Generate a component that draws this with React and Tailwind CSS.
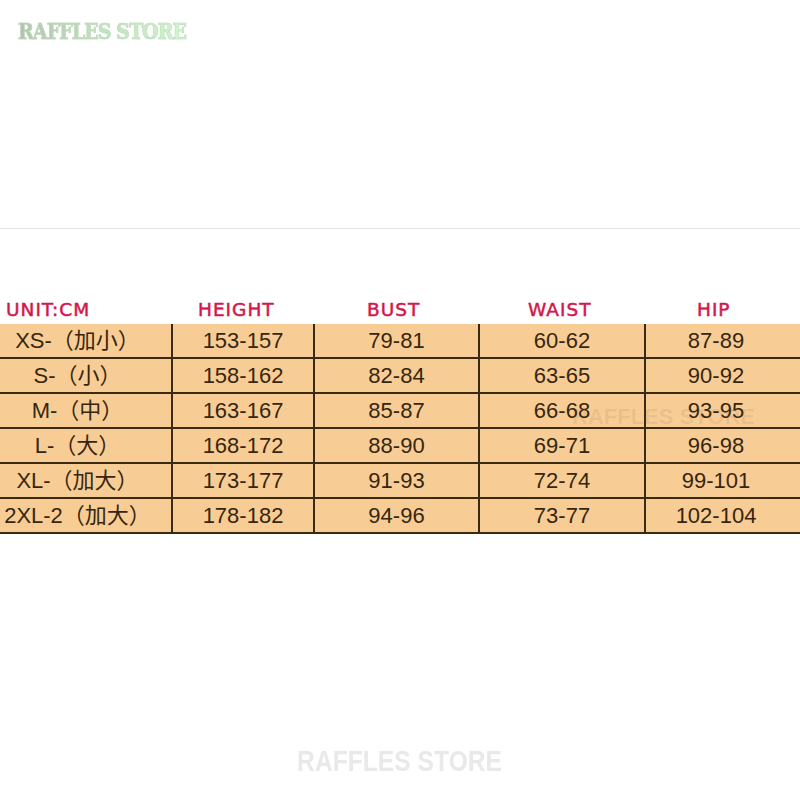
import React from "react";

const rows = [
    ["XS-（加小）", "153-157", "79-81", "60-62", "87-89"],
    ["S-（小）", "158-162", "82-84", "63-65", "90-92"],
    ["M-（中）", "163-167", "85-87", "66-68", "93-95"],
    ["L-（大）", "168-172", "88-90", "69-71", "96-98"],
    ["XL-（加大）", "173-177", "91-93", "72-74", "99-101"],
    ["2XL-2（加大）", "178-182", "94-96", "73-77", "102-104"],
];

const cols = "grid grid-cols-[173px_142px_165px_166px_154px]";

export default function App() {
    return (
        <div className="w-[800px] h-[800px] bg-white flex flex-col overflow-hidden" style={{ fontFamily: '"Liberation Sans", "Noto Sans CJK SC", sans-serif' }}>
            {/* top watermark */}
            <div className="h-[228px] pt-[15px] pl-[18px]">
                <span className="inline-block origin-left scale-x-[0.87] text-[22px] font-bold tracking-[-1.2px] bg-gradient-to-r from-[#b2c3b0] via-[#c0e2be] to-[#d0f7ce] bg-clip-text text-transparent [-webkit-text-stroke:0.7px_#c4dcc2]" style={{ fontFamily: '"DejaVu Serif", serif' }}>
                    RAFFLES STORE
                </span>
            </div>
            <div className="border-t border-[#e3e3e3]" />

            {/* header labels */}
            <div className={`${cols} mt-[66px] h-[29px] pb-[5px] text-[18.5px] tracking-[1px] text-[#d4174b] [-webkit-text-stroke:0.5px_#d4174b] items-end leading-none`} style={{ fontFamily: '"DejaVu Sans", sans-serif' }}>
                <div className="pl-[6px]">UNIT:CM</div>
                <div className="pl-[25px]">HEIGHT</div>
                <div className="pl-[52px]">BUST</div>
                <div className="pl-[48px]">WAIST</div>
                <div className="pl-[51px]">HIP</div>
            </div>

            {/* size table */}
            <div className="relative bg-[#f8cd95] text-[#36260f] text-[22px]">
                {rows.map((r, i) => (
                    <div key={i} className={`${cols} h-[35px] border-b-2 border-[#3b2a12]`}>
                        {r.map((c, j) => (
                            <div key={j} className={`flex items-center justify-center ${j < 4 ? "border-r-2 border-[#3b2a12]" : ""} ${j === 0 ? "pr-[16px]" : ""} ${j === 4 ? "pr-[14px]" : ""}`}>
                                {c}
                            </div>
                        ))}
                    </div>
                ))}
                <div className="absolute left-[572px] top-[76px] text-[22px] font-bold text-[#6b4a20]/10 pointer-events-none">
                    RAFFLES STORE
                </div>
            </div>

            {/* bottom watermark */}
            <div className="flex-1 flex items-end justify-center pb-[17px]">
                <span className="inline-block scale-x-[0.85] text-[29px] font-bold text-[#e9e9e9]">
                    RAFFLES STORE
                </span>
            </div>
        </div>
    );
}
